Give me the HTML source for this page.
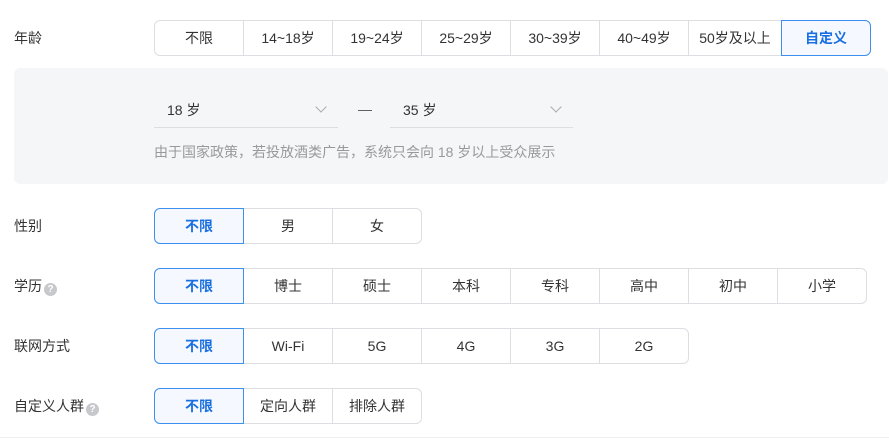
<!DOCTYPE html>
<html><head><meta charset="utf-8"><style>
*{box-sizing:border-box;margin:0;padding:0}
body{width:889px;height:439px;background:#fff;font-family:"Liberation Sans","Noto Sans CJK SC",sans-serif;font-size:14px;color:#333;position:relative;overflow:hidden}
.lbl{position:absolute;left:14px;line-height:18px}
.q{display:inline-block;width:13px;height:13px;border-radius:50%;background:#c6c8cc;color:#fff;font-size:10px;line-height:13px;text-align:center;vertical-align:-1px;margin-left:2px;font-weight:bold}
.grp{position:absolute;left:154px;height:36px;display:flex}
.b{height:36px;border:1px solid #dcdee2;margin-left:-1px;display:flex;align-items:center;justify-content:center;background:#fff;color:#333}
.grp .b:first-child{margin-left:0;border-radius:6px 0 0 6px}
.grp .b:last-child{border-radius:0 6px 6px 0}
.b.on{border-color:#3d8ef0;color:#1a6fe0;background:#f5f9ff;font-weight:bold;position:relative;z-index:1}
.panel{position:absolute;left:14px;top:68px;width:874px;height:116px;background:#f5f6f8;border-radius:6px}
.sel{position:absolute;top:96px;height:32px;border-bottom:1px solid #dcdee2;padding-left:13px;line-height:28px}
.chev{position:absolute;right:13px;top:7px;width:8px;height:8px;border-right:1px solid #aaa;border-bottom:1px solid #aaa;transform:rotate(45deg)}
</style></head><body>
<div class="lbl" style="top:29px">年龄</div>
<div class="grp" style="top:20px">
<div class="b" style="width:90px">不限</div><div class="b" style="width:90px">14~18岁</div><div class="b" style="width:90px">19~24岁</div><div class="b" style="width:90px">25~29岁</div><div class="b" style="width:90px">30~39岁</div><div class="b" style="width:90px">40~49岁</div><div class="b" style="width:94px">50岁及以上</div><div class="b on" style="width:90px">自定义</div>
</div>
<div class="panel"></div>
<div class="sel" style="left:154px;width:184px">18 岁<span class="chev"></span></div>
<div style="position:absolute;left:358px;top:101px;color:#555">—</div>
<div class="sel" style="left:390px;width:183px">35 岁<span class="chev"></span></div>
<div style="position:absolute;left:154px;top:142px;color:#999">由于国家政策，若投放酒类广告，系统只会向 18 岁以上受众展示</div>

<div class="lbl" style="top:217px">性别</div>
<div class="grp" style="top:208px"><div class="b on" style="width:90px">不限</div><div class="b" style="width:90px">男</div><div class="b" style="width:90px">女</div></div>

<div class="lbl" style="top:277px">学历<span class="q">?</span></div>
<div class="grp" style="top:268px"><div class="b on" style="width:90px">不限</div><div class="b" style="width:90px">博士</div><div class="b" style="width:90px">硕士</div><div class="b" style="width:90px">本科</div><div class="b" style="width:90px">专科</div><div class="b" style="width:90px">高中</div><div class="b" style="width:90px">初中</div><div class="b" style="width:90px">小学</div></div>

<div class="lbl" style="top:337px">联网方式</div>
<div class="grp" style="top:328px"><div class="b on" style="width:90px">不限</div><div class="b" style="width:90px">Wi-Fi</div><div class="b" style="width:90px">5G</div><div class="b" style="width:90px">4G</div><div class="b" style="width:90px">3G</div><div class="b" style="width:90px">2G</div></div>

<div class="lbl" style="top:397px">自定义人群<span class="q">?</span></div>
<div class="grp" style="top:388px"><div class="b on" style="width:90px">不限</div><div class="b" style="width:90px">定向人群</div><div class="b" style="width:90px">排除人群</div></div>
<div style="position:absolute;left:0;top:437px;width:889px;height:1px;background:#eceef1"></div>
</body></html>
